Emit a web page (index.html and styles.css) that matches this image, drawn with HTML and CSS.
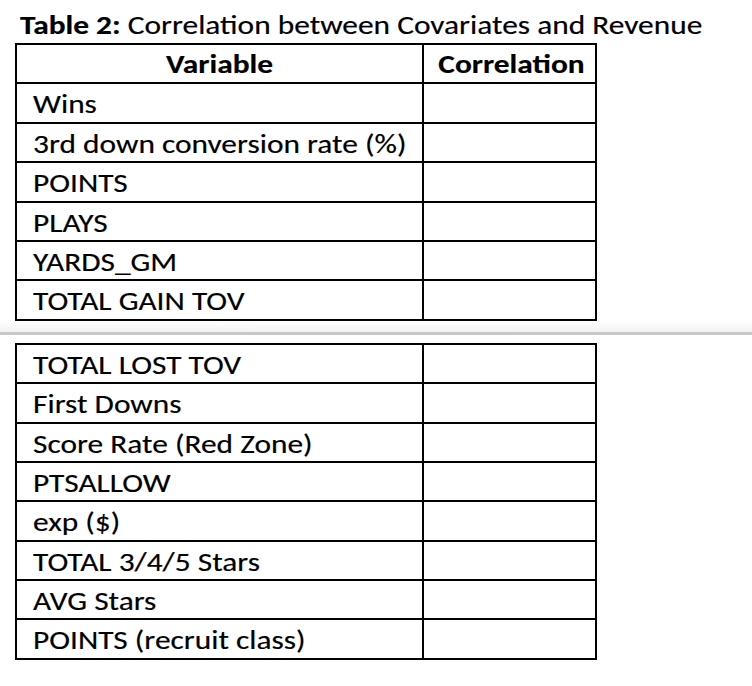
FILE: index.html
```html
<!DOCTYPE html>
<html lang="en">
<head>
<meta charset="utf-8">
<title>Table 2</title>
<link rel="stylesheet" href="styles.css">
</head>
<body>
<div class="title"><span class="t"><b>Table 2:</b> Correlation between Covariates and Revenue</span></div>
<table class="grid">
  <colgroup><col class="c1"><col class="c2"></colgroup>
  <tr><th><span class="t">Variable</span></th><th class="corr"><span class="t">Correlation</span></th></tr>
  <tr><td><span class="t">Wins</span></td><td></td></tr>
  <tr><td><span class="t">3rd down conversion rate (%)</span></td><td></td></tr>
  <tr><td><span class="t">POINTS</span></td><td></td></tr>
  <tr><td><span class="t">PLAYS</span></td><td></td></tr>
  <tr><td><span class="t">YARDS_GM</span></td><td></td></tr>
  <tr><td><span class="t">TOTAL GAIN TOV</span></td><td></td></tr>
</table>
<div class="pagebreak"><div class="shade"></div><div class="line"></div></div>
<table class="grid">
  <colgroup><col class="c1"><col class="c2"></colgroup>
  <tr><td><span class="t">TOTAL LOST TOV</span></td><td></td></tr>
  <tr><td><span class="t">First Downs</span></td><td></td></tr>
  <tr><td><span class="t">Score Rate (Red Zone)</span></td><td></td></tr>
  <tr><td><span class="t">PTSALLOW</span></td><td></td></tr>
  <tr><td><span class="t">exp ($)</span></td><td></td></tr>
  <tr><td><span class="t">TOTAL 3/4/5 Stars</span></td><td></td></tr>
  <tr><td><span class="t">AVG Stars</span></td><td></td></tr>
  <tr><td><span class="t">POINTS (recruit class)</span></td><td></td></tr>
</table>
</body>
</html>
```
FILE: styles.css
```css
html, body {
  margin: 0;
  background: #fff;
}
body {
  color: #000;
  font-family: Carlito, Calibri, "Liberation Sans", sans-serif;
  font-size: 31.4px;
}
.t {
  display: block;
  line-height: 37px;
  white-space: nowrap;
  transform: scaleY(0.86);
  -webkit-text-stroke: 0.2px #000;
}
.title {
  height: 43px;
  box-sizing: border-box;
  padding: 6px 0 0 20px;
}
.title b {
  font-weight: bold;
}
.grid {
  border-collapse: collapse;
  table-layout: fixed;
  width: 582px;
  margin-left: 15px;
}
.grid .c1 { width: 407px; }
.grid .c2 { width: 173px; }
.grid tr { height: 39.4px; }
.grid td,
.grid th {
  border: 2px solid #000;
  padding: 0 0 0 16px;
  vertical-align: top;
  text-align: left;
  font-weight: normal;
}
.grid td .t {
  transform: translateY(1px) scaleY(0.86);
}
.grid th {
  padding: 0;
  text-align: center;
  font-weight: bold;
}
.grid th.corr {
  padding-left: 4px;
}
.pagebreak {
  margin: 0 0 8px;
}
.shade {
  height: 11px;
  background: linear-gradient(#fff, #f2f2f2);
}
.line {
  height: 3px;
  background: #c8c8c8;
}
```
